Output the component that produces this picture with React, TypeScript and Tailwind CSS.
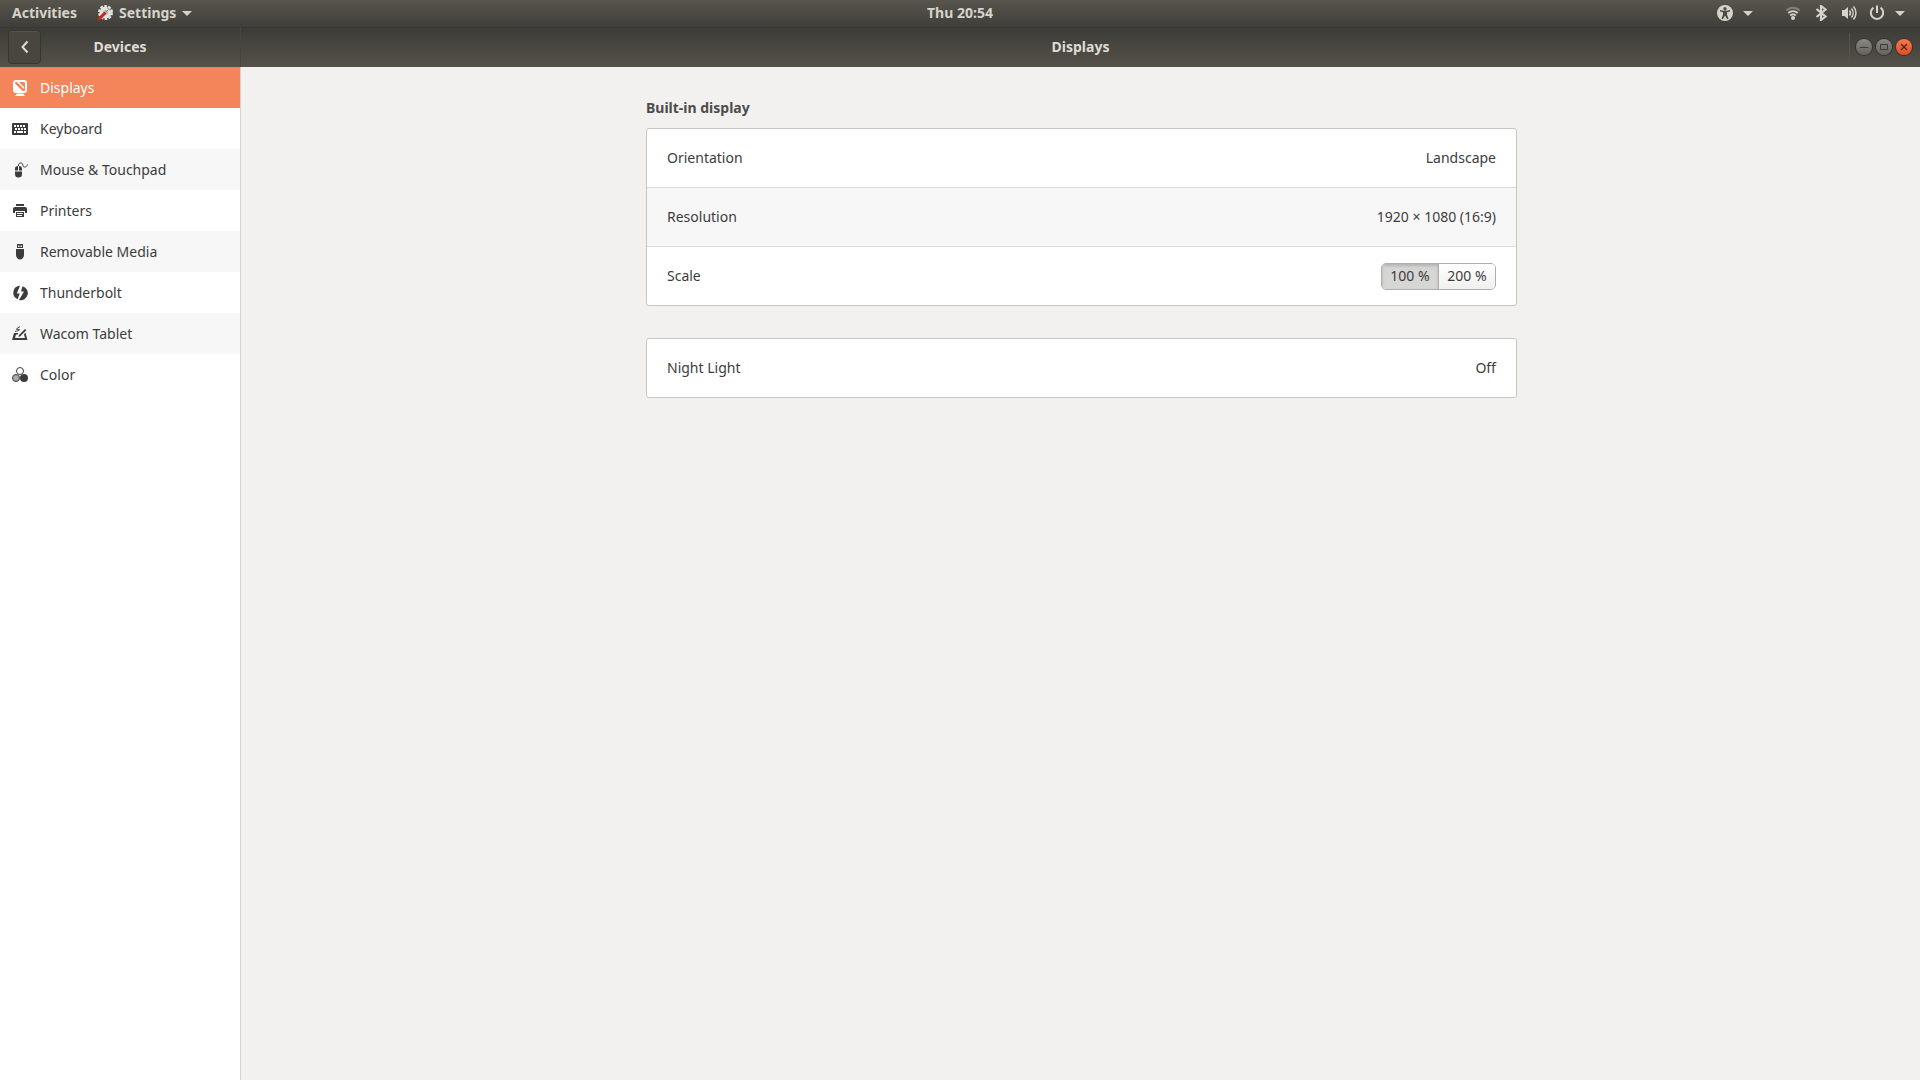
import { useState } from "react";
import type { ReactNode } from "react";

interface IconProps {
  children: ReactNode;
}

const Icon: React.FC<IconProps> = ({ children }) => (
  <svg className="size-4 shrink-0" viewBox="0 0 16 16" fill="currentColor" aria-hidden="true">
    {children}
  </svg>
);

const DisplayIcon = () => (
  <Icon>
    <path
      fillRule="evenodd"
      d="M4 0h8a3 3 0 0 1 3 3v7a3 3 0 0 1-3 3H4a3 3 0 0 1-3-3V3a3 3 0 0 1 3-3zM4.500 2C3.500 2 3 2.500 3 3.500L10.500 11h1c1 0 1.500-.5 1.500-1.500v-6c0-1-.5-1.500-1.500-1.500H7l5 5v2L5 2z"
    />
    <path d="M5 13.500h6l2 2.500H3z" />
  </Icon>
);

const KeyboardIcon = () => (
  <Icon>
    <path
      fillRule="evenodd"
      d="M1 2h14a1 1 0 0 1 1 1v10a1 1 0 0 1-1 1H1a1 1 0 0 1-1-1V3a1 1 0 0 1 1-1zM2 4v2h2V4zM5 4v2h2V4zM8 4v2h2V4zM11 4v2h2V4zM3 7v2h2V7zM6 7v2h2V7zM9 7v2h2V7zM12 7v2h2V7zM2 10v2h2v-2zM5 10v2h6v-2zM12 10v2h2v-2z"
    />
  </Icon>
);

const MouseIcon = () => (
  <Icon>
    <path d="M3 8.500V6.500C3 5 4 4 6 4v4.500zM7 4c2 0 3 1 3 2.500v2H7zM3 9.500h7v2.500a3.500 3.500 0 0 1-7 0z" />
    <path
      d="M6.500 4V3c0-2 3-3 4-1 .8 1.600.5 3 2 3s2.500-.8 3-2.500"
      fill="none"
      stroke="currentColor"
      strokeWidth="1"
    />
  </Icon>
);

const PrinterIcon = () => (
  <Icon>
    <path d="M4 1h8v2H4zM3 4h10c1.200 0 2 .8 2 2v4h-2V8H3v2H1V6c0-1.200.8-2 2-2z" />
    <path fillRule="evenodd" d="M4 9h8v5H4zM5 10v1h6v-1zM5 12v1h5v-1z" />
  </Icon>
);

const UsbIcon = () => (
  <Icon>
    <path fillRule="evenodd" d="M5 0h6v4H5zM6 1.500v1.500h1.500V1.500zM8.500 1.500v1.500H10V1.500z" />
    <path d="M4 5h8v6c0 2.500-2 4.500-4 4.500S4 13.500 4 11z" />
  </Icon>
);

const ThunderboltIcon = () => (
  <Icon>
    <path d="M8 .8 4.800 8.500h3L5.500 14.200A7 7 0 0 1 8 .8z" />
    <path d="M10.500 1.200A7 7 0 0 1 7 14.900L12 6.500H9z" />
  </Icon>
);

const TabletIcon = () => (
  <Icon>
    <path fillRule="evenodd" d="M2 7h4v1.500H4L3 12h10l-1-3.500 1.400-2L15.500 14H0z" />
    <path d="m6.500 11 .5-2 6-6 1.300 1.300-6 6z" />
    <path d="M3 5.500c2-.5 5-1 4.500-1.800S4 4 4.500 3 7 1.500 8 .5" fill="none" stroke="currentColor" strokeWidth="1" />
  </Icon>
);

const ColorIcon = () => (
  <Icon>
    <circle cx="8" cy="4" r="3.500" fill="none" stroke="currentColor" />
    <circle cx="4" cy="11" r="3.500" fill="#aaa" stroke="currentColor" />
    <circle cx="12" cy="11" r="4" />
  </Icon>
);

const SettingsIcon = () => (
  <svg className="size-4" viewBox="0 0 16 16" aria-hidden="true">
    <circle cx="8.500" cy="7.500" r="6" fill="#e2e1df" />
    <circle cx="8.500" cy="7.500" r="6.500" fill="none" stroke="#e4e4e2" strokeWidth="2" strokeDasharray="2.700 1.380" />
    <circle cx="8.500" cy="7.500" r="2.500" fill="#b5b1ab" />
    <path d="M2 14 7.500 8.500" stroke="#c3271e" strokeWidth="3" strokeLinecap="round" />
    <path d="m8 8 3.500-3.500M10.500 2.500l1 2 2.500.5" fill="none" stroke="#8d8a84" strokeWidth="1" />
  </svg>
);

const Caret = () => (
  <svg className="h-[5px] w-[10px]" viewBox="0 0 10 5" fill="currentColor" aria-hidden="true">
    <path d="M0 0h10L5 5z" />
  </svg>
);

const AccessibilityIcon = () => (
  <Icon>
    <path
      fillRule="evenodd"
      d="M8 0a8 8 0 1 0 0 16A8 8 0 0 0 8 0zM8 2a1.700 1.700 0 1 1 0 3.400A1.700 1.700 0 0 1 8 2zM3 5l3.500.8h3L13 5v1.500l-3 .8v2.200L11.500 14H10L8 10.500 6 14H4.500L6 9.500V7.300l-3-.8z"
    />
  </Icon>
);

const WifiIcon = () => (
  <Icon>
    <circle cx="8" cy="13" r="2" />
    <g fill="none" stroke="currentColor" strokeWidth="1.800">
      <path d="M1.300 5.500C5 1.800 11 1.800 14.700 5.500" opacity=".4" />
      <path d="M3.300 8c2.600-2.500 6.800-2.500 9.400 0" />
      <path d="M5.200 10.500c1.600-1.500 4-1.500 5.600 0" />
    </g>
  </Icon>
);

const BluetoothIcon = () => (
  <Icon>
    <path d="m3.500 4 9 7.500L8 15V1l4.500 3.500-9 7.500" fill="none" stroke="currentColor" strokeWidth="2.200" />
  </Icon>
);

const VolumeIcon = () => (
  <Icon>
    <path d="M1 5h2.500L7 2v12l-3.500-3H1z" />
    <g fill="none" stroke="currentColor" strokeWidth="1.500">
      <path d="M8.500 5.500a4 4 0 0 1 0 5" />
      <path d="M10.500 3.500c2.200 2.600 2.200 6.400 0 9" />
      <path d="M12.500 1.500c3.300 3.800 3.300 9.200 0 13" />
    </g>
  </Icon>
);

const PowerIcon = () => (
  <Icon>
    <g fill="none" stroke="currentColor" strokeWidth="2">
      <path d="M4.500 2.700a6.200 6.200 0 1 0 7 0" />
      <path d="M8 .5V8" />
    </g>
  </Icon>
);

const devices = [
  { name: "Displays", icon: <DisplayIcon /> },
  { name: "Keyboard", icon: <KeyboardIcon /> },
  { name: "Mouse & Touchpad", icon: <MouseIcon /> },
  { name: "Printers", icon: <PrinterIcon /> },
  { name: "Removable Media", icon: <UsbIcon /> },
  { name: "Thunderbolt", icon: <ThunderboltIcon /> },
  { name: "Wacom Tablet", icon: <TabletIcon /> },
  { name: "Color", icon: <ColorIcon /> },
];

const TopBar = () => (
  <header className="grid h-[27px] grid-cols-[1fr_auto_1fr] items-center bg-linear-to-b from-[#58554d] to-[#3f3e39] px-3 pb-px text-sm font-bold text-[#d6d3cb]">
    <div className="flex items-center gap-5">
      <button type="button">Activities</button>
      <button type="button" className="flex items-center gap-1.5">
        <SettingsIcon />
        Settings
        <Caret />
      </button>
    </div>
    <button type="button">Thu 20:54</button>
    <div className="flex items-center justify-end pr-[3px] text-[#d6d3cb]">
      <button type="button" aria-label="Accessibility" className="mr-8 flex items-center gap-2.5">
        <AccessibilityIcon />
        <Caret />
      </button>
      <button type="button" aria-label="System menu" className="flex items-center gap-3">
        <WifiIcon />
        <BluetoothIcon />
        <VolumeIcon />
        <span className="flex items-center gap-2.5">
          <PowerIcon />
          <Caret />
        </span>
      </button>
    </div>
  </header>
);

const WindowButtons = () => {
  const round =
    "flex size-4 items-center justify-center rounded-full bg-linear-to-b from-[#8b8983] to-[#64625c] text-[#3c3b37] shadow-[0_0_0_1px_#34332f]";
  return (
    <div className="flex h-7 items-center gap-1 justify-self-end border-l border-[#55534c] pl-1.5">
      <button type="button" aria-label="Minimize" className={round}>
        <Icon>
          <path d="M4 8h8v1H4z" />
        </Icon>
      </button>
      <button type="button" aria-label="Maximize" className={round}>
        <Icon>
          <path d="M4.500 5.500h7v5h-7z" fill="none" stroke="currentColor" />
        </Icon>
      </button>
      <button
        type="button"
        aria-label="Close"
        className="flex size-4 items-center justify-center rounded-full bg-linear-to-b from-[#f4764b] to-[#e6501f] text-[#4b2413] shadow-[0_0_0_1px_#34332f]"
      >
        <Icon>
          <path d="m5 5 6 6m0-6-6 6" fill="none" stroke="currentColor" strokeWidth="1.300" />
        </Icon>
      </button>
    </div>
  );
};

const TitleBar = () => (
  <div className="flex h-10 bg-linear-to-b from-[#3c3b37] to-[#545249] text-sm font-bold text-[#dfdbd2] shadow-[inset_0_1px_#383733]">
    <div className="grid w-[241px] shrink-0 grid-cols-[1fr_auto_1fr] items-center border-r border-[#45443e] px-2">
      <button
        type="button"
        aria-label="Back"
        className="flex h-[34px] w-[33px] items-center justify-center rounded border border-[#36352f] bg-[#48463f] shadow-[inset_0_1px_#56544c]"
      >
        <Icon>
          <path d="M10.500 2.500 5.500 8l5 5.500" fill="none" stroke="currentColor" strokeWidth="2" />
        </Icon>
      </button>
      <h2>Devices</h2>
    </div>
    <div className="grid flex-1 grid-cols-[1fr_auto_1fr] items-center px-2">
      <h1 className="col-start-2">Displays</h1>
      <WindowButtons />
    </div>
  </div>
);

interface SidebarProps {
  selected: string;
  onSelect: (name: string) => void;
}

const Sidebar: React.FC<SidebarProps> = ({ selected, onSelect }) => (
  <nav className="w-[241px] shrink-0 border-r border-[#d5d3cf] bg-white">
    {devices.map(({ name, icon }) => (
      <a
        key={name}
        href="#"
        onClick={() => onSelect(name)}
        className={`flex h-[41px] items-center gap-3 px-3 ${
          selected === name ? "bg-[#f48459] text-white" : "odd:bg-[#f7f7f7]"
        }`}
      >
        {icon}
        {name}
      </a>
    ))}
  </nav>
);

interface RowProps {
  label: string;
  value: string;
}

const Row: React.FC<RowProps> = ({ label, value }) => (
  <button type="button" className="flex h-[58px] items-center justify-between bg-white px-5 even:bg-[#f7f7f7]">
    <span>{label}</span>
    <span>{value}</span>
  </button>
);

// the 1px gap lets the grey background through as the row separator
const Card: React.FC<{ children: ReactNode }> = ({ children }) => (
  <section className="flex flex-col gap-px overflow-hidden rounded-[3px] border border-[#c8c4c0] bg-[#dcdcdc]">
    {children}
  </section>
);

const ScaleSwitch = () => {
  const [scale, setScale] = useState(100);
  return (
    <div className="flex h-[27px] w-[115px] overflow-hidden rounded-[5px] border border-[#b0aeab]">
      {[100, 200].map((value) => (
        <button
          key={value}
          type="button"
          aria-pressed={scale === value}
          onClick={() => setScale(value)}
          className={`flex-1 not-first:border-l not-first:border-[#b0aeab] ${
            scale === value
              ? "bg-[#d6d6d5] shadow-[inset_0_2px_3px_#b4b3b1]"
              : "bg-linear-to-b from-white to-[#f0f0ef]"
          }`}
        >
          {value} %
        </button>
      ))}
    </div>
  );
};

export default function App() {
  const [selected, setSelected] = useState("Displays");

  return (
    <div className="flex min-h-screen flex-col bg-[#f2f1ef] font-['Noto_Sans',sans-serif] text-sm text-[#3c3c3c]">
      <TopBar />
      <TitleBar />
      <div className="flex flex-1">
        <Sidebar selected={selected} onSelect={setSelected} />
        <main className="flex-1 pt-[31px] pr-8 pl-[34px]">
          <div className="mx-auto max-w-[871px]">
            <h3 className="mb-2.5 font-bold text-[#4c4c4c]">Built-in display</h3>
            <div className="flex flex-col gap-8">
              <Card>
                <Row label="Orientation" value="Landscape" />
                <Row label="Resolution" value="1920 × 1080 (16:9)" />
                <div className="flex h-[58px] items-center justify-between bg-white px-5">
                  <span>Scale</span>
                  <ScaleSwitch />
                </div>
              </Card>
              <Card>
                <Row label="Night Light" value="Off" />
              </Card>
            </div>
          </div>
        </main>
      </div>
    </div>
  );
}
